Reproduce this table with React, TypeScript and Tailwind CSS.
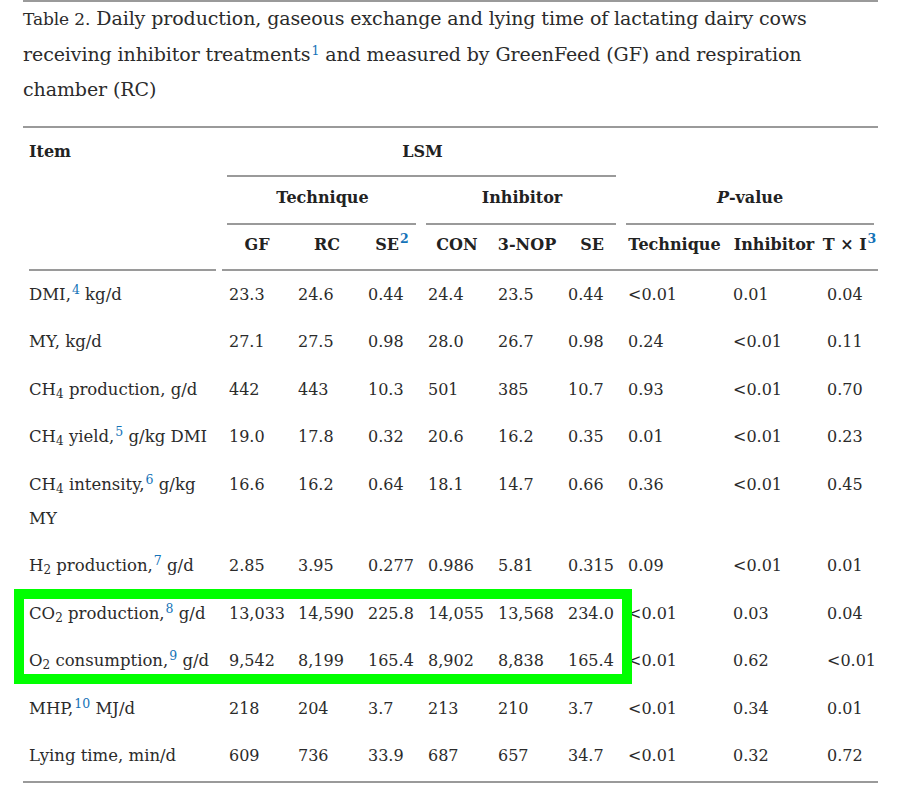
import React from "react";

type Row = {
  item: React.ReactNode;
  values: string[];
};

const Sup = ({ n }: { n: string | number }) => (
  <sup className="text-[#1473b8] text-[12.5px] ml-[1px]">{n}</sup>
);

const Sub = ({ n }: { n: string | number }) => (
  <sub className="text-[12px]">{n}</sub>
);

const rows: Row[] = [
  { item: <>DMI,<Sup n={4} /> kg/d</>, values: ["23.3", "24.6", "0.44", "24.4", "23.5", "0.44", "<0.01", "0.01", "0.04"] },
  { item: <>MY, kg/d</>, values: ["27.1", "27.5", "0.98", "28.0", "26.7", "0.98", "0.24", "<0.01", "0.11"] },
  { item: <>CH<Sub n={4} /> production, g/d</>, values: ["442", "443", "10.3", "501", "385", "10.7", "0.93", "<0.01", "0.70"] },
  { item: <>CH<Sub n={4} /> yield,<Sup n={5} /> g/kg DMI</>, values: ["19.0", "17.8", "0.32", "20.6", "16.2", "0.35", "0.01", "<0.01", "0.23"] },
  { item: <>CH<Sub n={4} /> intensity,<Sup n={6} /> g/kg<br />MY</>, values: ["16.6", "16.2", "0.64", "18.1", "14.7", "0.66", "0.36", "<0.01", "0.45"] },
  { item: <>H<Sub n={2} /> production,<Sup n={7} /> g/d</>, values: ["2.85", "3.95", "0.277", "0.986", "5.81", "0.315", "0.09", "<0.01", "0.01"] },
  { item: <>CO<Sub n={2} /> production,<Sup n={8} /> g/d</>, values: ["13,033", "14,590", "225.8", "14,055", "13,568", "234.0", "<0.01", "0.03", "0.04"] },
  { item: <>O<Sub n={2} /> consumption,<Sup n={9} /> g/d</>, values: ["9,542", "8,199", "165.4", "8,902", "8,838", "165.4", "<0.01", "0.62", "<0.01"] },
  { item: <>MHP,<Sup n={10} /> MJ/d</>, values: ["218", "204", "3.7", "213", "210", "3.7", "<0.01", "0.34", "0.01"] },
  { item: <>Lying time, min/d</>, values: ["609", "736", "33.9", "687", "657", "34.7", "<0.01", "0.32", "0.72"] },
];

const cols = "grid grid-cols-[200px_69px_70px_60px_70px_70px_60px_105px_94px_57px]";

export default function App() {
  return (
    <div className="relative w-[904px] h-[796px] bg-white text-[#2b2b2b] overflow-hidden" style={{ fontFamily: '"DejaVu Serif", serif' }}>
      <div className="ml-[23px] w-[855px]">
        <div className="h-[2px] bg-[#9a9a9a]" />

        {/* Caption */}
        <p className="text-[19px] leading-[35px] whitespace-nowrap -mt-[1px] tracking-[-0.1px]">
          <span className="text-[17px]">Table 2.</span> Daily production, gaseous exchange and lying time of lactating dairy cows
          <br />
          receiving inhibitor treatments<Sup n={1} /> and measured by GreenFeed (GF) and respiration
          <br />
          chamber (RC)
        </p>

        <div className="h-[2px] bg-[#9a9a9a] mt-[19px]" />

        {/* Header */}
        <div className={`${cols} font-bold text-[16px] text-[#222]`}>
          {/* row 1 */}
          <div className="h-[47px] flex items-center pl-[6px]">Item</div>
          <div className="col-span-6 flex flex-col">
            <div className="h-[47px] flex items-center justify-center">LSM</div>
            <div className="h-[2px] bg-[#9a9a9a] ml-[4px] mr-[6px]" />
          </div>
          <div className="col-span-3" />

          {/* row 2 */}
          <div />
          <div className="col-span-3 flex flex-col">
            <div className="h-[46px] flex items-center justify-center pb-[4px]">Technique</div>
            <div className="h-[2px] bg-[#9a9a9a] ml-[4px] mr-[6px]" />
          </div>
          <div className="col-span-3 flex flex-col">
            <div className="h-[46px] flex items-center justify-center pb-[4px]">Inhibitor</div>
            <div className="h-[2px] bg-[#9a9a9a] ml-[4px] mr-[6px]" />
          </div>
          <div className="col-span-3 flex flex-col">
            <div className="h-[46px] flex items-center justify-center pb-[4px]">
              <span className="italic">P</span>-value
            </div>
            <div className="h-[2px] bg-[#9a9a9a] ml-[4px] mr-[4px]" />
          </div>

          {/* row 3 */}
          <div className="flex flex-col justify-end">
            <div className="h-[2px] bg-[#9a9a9a] ml-[6px] mr-[7px]" />
          </div>
          {["GF", "RC", "SE", "CON", "3-NOP", "SE", "Technique", "Inhibitor", "T × I"].map((h, i) => (
            <div
              key={i}
              className={`h-[46px] flex items-center justify-center pb-[4px] border-b-2 border-[#9a9a9a] whitespace-nowrap ${i === 0 ? "-ml-[1px]" : ""}`}
            >
              {h}
              {i === 2 && <Sup n={2} />}
              {i === 8 && <Sup n={3} />}
            </div>
          ))}
        </div>

        {/* Body */}
        <div className="text-[16px]">
          {rows.map((r, ri) => (
            <div key={ri} className={cols}>
              <div className="px-[6px] py-[6.75px] leading-[34px] whitespace-nowrap text-[16.5px]">{r.item}</div>
              {r.values.map((v, vi) => (
                <div key={vi} className="px-[6px] py-[6.75px] leading-[34px] whitespace-nowrap">
                  {v}
                </div>
              ))}
            </div>
          ))}
        </div>

        <div className="h-[2px] bg-[#9a9a9a] mt-[1px]" />
      </div>

      {/* highlight box */}
      <div className="absolute left-[14px] top-[589px] w-[618px] h-[95px] border-[10px] border-[#00ff00]" />
    </div>
  );
}
